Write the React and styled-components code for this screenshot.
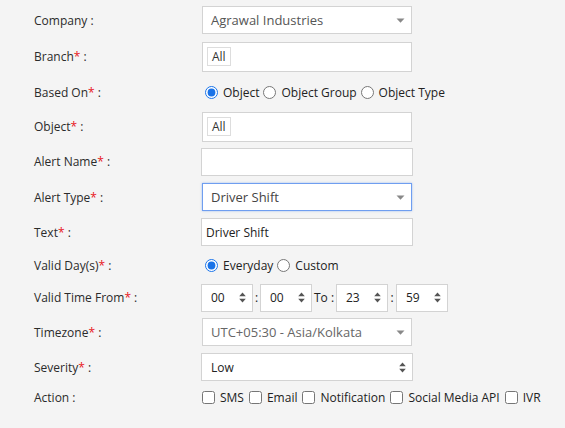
import React from 'react';
import styled, { createGlobalStyle } from 'styled-components';

const GlobalStyle = createGlobalStyle`
  html, body {
    margin: 0;
    background: #f4f4f4;
  }
  body {
    font-family: 'Open Sans', 'Liberation Sans', sans-serif;
    font-size: 12px;
    color: #333;
  }
`;

const Form = styled.div`
  padding: 2px 0 0 34px;
`;

const Row = styled.div`
  display: grid;
  grid-template-columns: 167px auto;
  align-items: center;
  height: ${(p) => p.h}px;
`;

const Label = styled.div`
  color: #2b2b2b;
  white-space: nowrap;
`;

const Star = styled.span`
  color: #e8141b;
`;

const Field = styled.div`
  display: flex;
  align-items: center;
  box-sizing: border-box;
  width: ${(p) => p.w || 212}px;
  height: ${(p) => p.h || 28}px;
  margin-left: ${(p) => p.ml || 0}px;
  padding: 0 ${(p) => p.pr || 8}px 0 ${(p) => p.pl || 8}px;
  background: #fff;
  border: 1px solid ${(p) => (p.focus ? '#6f9ef0' : '#d3d3d3')};
  box-shadow: ${(p) => (p.focus ? '0 0 2px rgba(80,140,240,.5)' : 'none')};
  color: ${(p) => p.color || '#333'};
  font-size: ${(p) => p.fs || 13}px;
`;

const Value = styled.span`
  flex: 1;
  white-space: nowrap;
`;

const Tag = styled.span`
  display: inline-flex;
  align-items: center;
  box-sizing: border-box;
  height: 19px;
  padding: 0 4px;
  border: 1px solid #ddd;
  background: #fff;
  color: #333;
  font-size: 12px;
`;

const Options = styled.div`
  display: flex;
  align-items: center;
  font-size: 12px;
  color: #222;
  white-space: nowrap;
`;

const Choice = styled.label`
  display: inline-flex;
  align-items: center;
`;

const Radio = styled.input.attrs({ type: 'radio' })`
  width: 13px;
  height: 13px;
  margin: 0 5px 0 ${(p) => (p.first ? 4 : 4)}px;
  accent-color: #1a73e8;
`;

const Check = styled.input.attrs({ type: 'checkbox' })`
  width: 13px;
  height: 13px;
  margin: 0 5px 0 ${(p) => (p.first ? 1 : 5)}px;
`;

const TimeRow = styled.div`
  display: flex;
  align-items: center;
`;

const Sep = styled.span`
  width: ${(p) => p.w}px;
  text-align: center;
  color: #222;
  font-size: 12px;
  white-space: nowrap;
`;

const Arrow = () => (
  <svg width="9" height="5" viewBox="0 0 9 5">
    <path d="M0.5 0.5 L8.5 0.5 L4.5 4.8 Z" fill="#888" />
  </svg>
);

const Spin = () => (
  <svg width="7" height="11" viewBox="0 0 7 11">
    <path d="M3.5 0.5 L6.8 4.2 L0.2 4.2 Z M0.2 6.8 L6.8 6.8 L3.5 10.5 Z" fill="#555" />
  </svg>
);

const Select = ({ value, focus, color }) => (
  <Field w={210} ml={1} focus={focus} color={color} pr={6}>
    <Value>{value}</Value>
    <Arrow />
  </Field>
);

const TimeBox = ({ value }) => (
  <Field w={52} fs={12} pl={9} pr={6} color="#222">
    <Value>{value}</Value>
    <Spin />
  </Field>
);

const L = ({ text, req }) => (
  <Label>
    {text}
    {req && <Star>*</Star>} :
  </Label>
);

export default function App() {
  return (
    <>
      <GlobalStyle />
      <Form>
        <Row h={36}>
          <Label>Company :</Label>
          <Select value="Agrawal Industries" color="#555" />
        </Row>
        <Row h={37}>
          <L text="Branch" req />
          <Field w={210} ml={1} h={30} pl={4}>
            <Tag>All</Tag>
          </Field>
        </Row>
        <Row h={34}>
          <L text="Based On" req />
          <Options>
            <Choice><Radio first name="based" defaultChecked />Object</Choice>
            <Choice><Radio name="based" />Object Group</Choice>
            <Choice><Radio name="based" />Object Type</Choice>
          </Options>
        </Row>
        <Row h={35}>
          <L text="Object" req />
          <Field w={210} ml={1} h={30} pl={4}>
            <Tag>All</Tag>
          </Field>
        </Row>
        <Row h={35}>
          <L text="Alert Name" req />
          <Field />
        </Row>
        <Row h={36}>
          <L text="Alert Type" req />
          <Select value="Driver Shift" focus color="#444" />
        </Row>
        <Row h={34}>
          <L text="Text" req />
          <Field pl={4} fs={12} color="#222">
            <Value>Driver Shift</Value>
          </Field>
        </Row>
        <Row h={32}>
          <L text="Valid Day(s)" req />
          <Options>
            <Choice><Radio first name="days" defaultChecked />Everyday</Choice>
            <Choice><Radio name="days" />Custom</Choice>
          </Options>
        </Row>
        <Row h={33}>
          <L text="Valid Time From" req />
          <TimeRow>
            <TimeBox value="00" />
            <Sep w={7}>:</Sep>
            <TimeBox value="00" />
            <Sep w={24}>To :</Sep>
            <TimeBox value="23" />
            <Sep w={8}>:</Sep>
            <TimeBox value="59" />
          </TimeRow>
        </Row>
        <Row h={36}>
          <L text="Timezone" req />
          <Select value="UTC+05:30 - Asia/Kolkata" color="#666" />
        </Row>
        <Row h={34}>
          <L text="Severity" req />
          <Field pl={9} pr={6} fs={12} color="#222">
            <Value>Low</Value>
            <Spin />
          </Field>
        </Row>
        <Row h={26}>
          <Label>Action :</Label>
          <Options>
            <Choice><Check first />SMS</Choice>
            <Choice><Check />Email</Choice>
            <Choice><Check />Notification</Choice>
            <Choice><Check />Social Media API</Choice>
            <Choice><Check />IVR</Choice>
          </Options>
        </Row>
      </Form>
    </>
  );
}
